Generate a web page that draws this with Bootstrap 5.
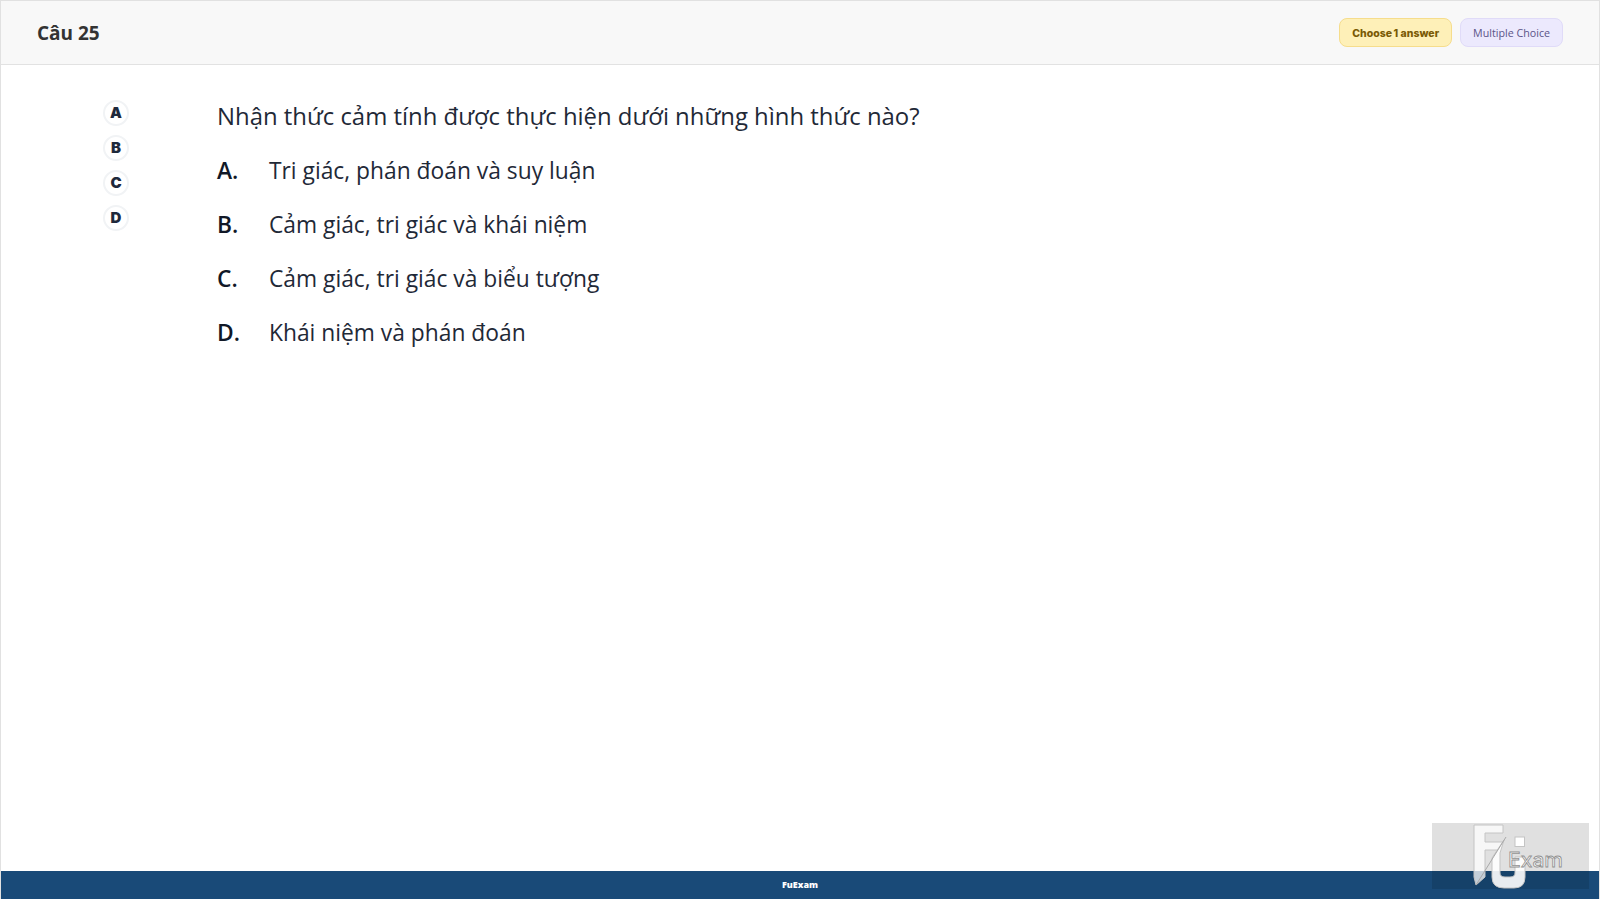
<!DOCTYPE html>
<html lang="en">
<head>
  <meta charset="UTF-8">
  <title>Câu 25 - FuExam</title>
  <link rel="stylesheet" href="https://cdn.jsdelivr.net/npm/bootstrap@5.3.0/dist/css/bootstrap.min.css">
  <style>
  html, body { height: 100%; }
  body {
    font-family: "Open Sans", "Noto Sans", sans-serif;
    color: #1f2937;
    background: #fff;
    overflow: hidden;
  }
  .exam-page {
    height: 899px;
    border: 1px solid #e1e1e1;
    border-bottom: 0;
  }
  .exam-header {
    height: 64px;
    padding: 1px 36px 0;
    background: #f8f8f8;
    border-bottom: 1px solid #e2e2e2;
  }
  .exam-title { font-size: 19px; font-weight: 700; color: #333; }
  .tag {
    height: 29px;
    padding: 1px 12px 0;
    font-size: 11px;
    border-radius: 8px;
    border: 1px solid;
    white-space: nowrap;
  }
  .tag-row { margin-bottom: 1px; }
  .tag-choose {
    background: #fef0b8;
    border-color: #f6dd8c;
    color: #7a5a05;
    font-family: "Inter", sans-serif;
    font-weight: 800;
    font-size: 10.5px;
    padding-top: 2px;
  }
  .tag-type { background: #ece9fd; border-color: #e0dbf8; color: #5b5488; font-size: 10.7px; }
  .exam-body { padding: 34px 0 0 102px; }
  .answer-nav { width: 114px; gap: 9px; padding-top: 1px; }
  .answer-dot {
    width: 26px;
    height: 26px;
    background: #fff;
    border: 2px solid #f1f3f5;
    border-radius: 50%;
    font-family: "Inter", sans-serif;
    font-size: 15px;
    font-weight: 900;
    color: #1e293b;
  }
  .question { font-size: 23.9px; line-height: 32px; color: #1f2937; margin: 1px 0 23px; }
  .option { font-size: 22.8px; line-height: 32px; margin-bottom: 22px; color: #1f2937; }
  .option-key { width: 52px; font-weight: 600; color: #111827; }
  .exam-footer {
    height: 28px;
    background: #194a78;
    color: #fff;
    font-size: 9px;
    font-weight: 800;
    margin-top: auto;
  }
  .watermark {
    position: absolute;
    left: 1432px;
    top: 823px;
    width: 157px;
    height: 66px;
    background: rgba(0, 0, 0, .12);
  }
  .watermark text {
    font-family: "Inter", sans-serif;
    font-size: 20px;
    fill: #fff;
    stroke: #909090;
    stroke-width: .8;
  }
  </style>
</head>
<body>
  <div class="exam-page d-flex flex-column">
    <div class="exam-header d-flex align-items-center justify-content-between">
      <div class="exam-title">Câu 25</div>
      <div class="tag-row d-flex gap-2">
        <span class="tag tag-choose d-inline-flex align-items-center">Choose&#8201;1 answer</span>
        <span class="tag tag-type d-inline-flex align-items-center">Multiple Choice</span>
      </div>
    </div>

    <div class="exam-body d-flex">
      <div class="answer-nav d-flex flex-column" id="answerNav"></div>
      <div>
        <p class="question">Nhận thức cảm tính được thực hiện dưới những hình thức nào?</p>
        <div id="options"></div>
      </div>
    </div>

    <div class="exam-footer d-flex align-items-center justify-content-center">FuExam</div>
  </div>

  <div class="watermark">
    <svg width="157" height="66" viewBox="0 0 157 66">
      <!-- F mark with the lightning cut -->
      <path d="M42 2H71V10H53V19H71L66 27H53V54L44 62L42 54Z" fill="#fff" fill-opacity=".75" stroke="#c4c4c4"/>
      <!-- U mark -->
      <path d="M72 17L60 35V54Q60 65 72 65H82Q93 65 93 54V34H83V50Q83 54 78 54H73Q68 54 68 50V30Z" fill="#fff" fill-opacity=".9" stroke="#c4c4c4"/>
      <rect x="83" y="14" width="9.500" height="9.500" fill="#fff" stroke="#c4c4c4"/>
      <path d="M74 14L44 62" stroke="#a9a9a9" fill="none"/>
      <text x="76" y="44" textLength="55" lengthAdjust="spacingAndGlyphs">Exam</text>
    </svg>
  </div>

  <script>
  const options = [
    ['A.', 'Tri giác, phán đoán và suy luận'],
    ['B.', 'Cảm giác, tri giác và khái niệm'],
    ['C.', 'Cảm giác, tri giác và biểu tượng'],
    ['D.', 'Khái niệm và phán đoán']
  ];

  document.getElementById('answerNav').innerHTML = options.map(o =>
    `<div class="answer-dot d-flex align-items-center justify-content-center">${o[0][0]}</div>`
  ).join('');

  document.getElementById('options').innerHTML = options.map(o =>
    `<div class="option d-flex"><span class="option-key">${o[0]}</span><span>${o[1]}</span></div>`
  ).join('');
  </script>
  <script src="https://cdn.jsdelivr.net/npm/bootstrap@5.3.0/dist/js/bootstrap.bundle.min.js"></script>
</body>
</html>
